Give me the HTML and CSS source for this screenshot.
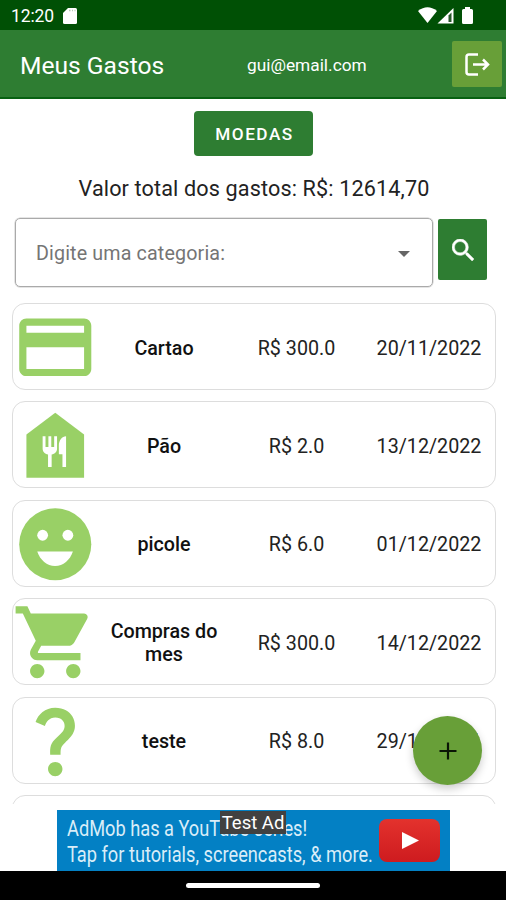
FILE: index.html
```
<!DOCTYPE html>
<html lang="pt-BR">
<head>
<meta charset="utf-8">
<title>Meus Gastos</title>
<link rel="stylesheet" href="styles.css">
</head>
<body>
<div class="screen">
  <div class="status">
    <span class="clock">12:20</span>
    <svg class="sd" viewBox="0 0 14 16"><path d="M5 0h7.500q1.500 0 1.500 1.500v13q0 1.500-1.500 1.500h-11Q0 16 0 14.500V5z" fill="#fff"/><path d="M6 2.500h1.500M9 2.500h1M11.500 2.500h1" stroke="#b5c9b5" stroke-width="1.500"/></svg>
    <svg class="signals" viewBox="0 0 56 18"><path d="M0 4Q9.500-3.500 19 4L9.500 16z" fill="#fff"/><path d="M19.500 16.500L35.500 1v15.500z" fill="#fff"/><path d="M30.500 15V8.500l3-3V15z" fill="#27572a"/><path d="M44 3.500q0-1.500 1.500-1.500h1.500V0h5v2h1.500Q55 2 55 3.500v12q0 1.500-1.500 1.500h-8Q44 17 44 15.500z" fill="#fff"/></svg>
  </div>
  <header class="bar">
    <h1 class="title">Meus Gastos</h1>
    <span class="email">gui@email.com</span>
    <button class="logout" aria-label="Sair"><svg viewBox="0 0 25 23"><path d="M13 1.500H4Q1.500 1.500 1.500 4v15q0 2.500 2.500 2.500h9M8 11.500h15M18 6.500l5 5-5 5" fill="none" stroke="#fff" stroke-width="2.500"/></svg></button>
  </header>
  <main class="content">
    <button class="coins">MOEDAS</button>
    <p class="total">Valor total dos gastos: R$: 12614,70</p>
    <div class="search">
      <div class="select"><span>Digite uma categoria:</span><i class="caret"></i></div>
      <button class="find" aria-label="Buscar"><svg viewBox="3 3 17.500 17.500"><path fill="#fff" stroke="#fff" stroke-width=".4" d="M15.500 14h-.79l-.28-.27A6.471 6.471 0 0 0 16 9.500 6.500 6.500 0 1 0 9.500 16c1.610 0 3.090-.59 4.230-1.570l.27.28v.79l5 4.990L20.490 19l-4.990-5zm-6 0C7.010 14 5 11.990 5 9.500S7.010 5 9.500 5 14 7.010 14 9.500 11.990 14 9.500 14z"/></svg></button>
    </div>
    <div class="list">
      <div class="item">
        <svg class="icon" viewBox="0 0 24 24"><path d="M20 4H4c-1.110 0-1.990.89-1.990 2L2 18c0 1.110.89 2 2 2h16c1.110 0 2-.89 2-2V6c0-1.110-.89-2-2-2zm0 14H4v-6h16v6zm0-10H4V6h16v2z"/></svg>
        <span class="name">Cartao</span><span class="price">R$ 300.0</span><span class="date">20/11/2022</span>
      </div>
      <div class="item">
        <svg class="icon" viewBox="0 0 24 24"><path d="M12 3L4 9v12h16V9l-8-6z"/><path fill="#fff" d="M8.500 9.500h.8v3h.8v-3h.8v3h.8v-3h.8V13c0 .8-.6 1.500-1.500 1.600V18h-1v-3.400C9.100 14.500 8.500 13.800 8.500 13zM15 9.500V18h-1v-3.500h-1V12c0-1.300.9-2.500 2-2.500z"/></svg>
        <span class="name">Pão</span><span class="price">R$ 2.0</span><span class="date">13/12/2022</span>
      </div>
      <div class="item">
        <svg class="icon" viewBox="0 0 24 24"><circle cx="12" cy="12" r="10"/><g fill="#fff"><circle cx="8.500" cy="9.500" r="1.500"/><circle cx="15.500" cy="9.500" r="1.500"/><path d="M7 14h9.900c-.8 2.400-2.700 4-4.950 4S7.800 16.400 7 14z"/></g></svg>
        <span class="name">picole</span><span class="price">R$ 6.0</span><span class="date">01/12/2022</span>
      </div>
      <div class="item">
        <svg class="icon" viewBox="0 0 24 24"><path d="M7 18c-1.100 0-1.990.9-1.990 2S5.900 22 7 22s2-.9 2-2-.9-2-2-2zM1 2v2h2l3.600 7.590-1.350 2.450c-.16.28-.25.61-.25.960 0 1.100.9 2 2 2h12v-2H7.420c-.14 0-.25-.11-.25-.25l.03-.12.900-1.630h7.450c.75 0 1.410-.41 1.750-1.030l3.580-6.490A1.003 1.003 0 0 0 20 4H5.210l-.94-2H1zm16 16c-1.100 0-1.990.9-1.990 2s.89 2 1.990 2 2-.9 2-2-.9-2-2-2z"/></svg>
        <span class="name">Compras do mes</span><span class="price">R$ 300.0</span><span class="date">14/12/2022</span>
      </div>
      <div class="item">
        <svg class="icon" viewBox="0 0 24 24"><path d="M11.070 12.850c.77-1.390 2.250-2.210 3.110-3.440.91-1.290.4-3.700-2.180-3.700-1.690 0-2.520 1.280-2.870 2.340L6.540 6.960C7.250 4.830 9.180 3 11.990 3c2.350 0 3.960 1.070 4.780 2.410.7 1.150 1.110 3.300.03 4.900-1.200 1.770-2.350 2.310-2.970 3.450-.25.46-.35.76-.35 2.240h-2.890c-.01-.78-.13-2.050.48-3.150zM14 20c0 1.100-.9 2-2 2s-2-.9-2-2 .9-2 2-2 2 .9 2 2z"/></svg>
        <span class="name">teste</span><span class="price">R$ 8.0</span><span class="date">29/12/2021</span>
      </div>
      <div class="item"></div>
    </div>
  </main>
  <div class="ad">
    <p class="adtext">AdMob has a YouTube series!<br>Tap for tutorials, screencasts, &amp; more.</p>
    <div class="play"><svg viewBox="0 0 17 17"><path d="M0 0l17 8.500L0 17z" fill="#fff"/></svg></div>
    <span class="test">Test Ad</span>
  </div>
  <div class="nav"><i></i></div>
  <button class="fab" aria-label="Adicionar"><svg viewBox="0 0 18 18"><path d="M9 .5v17M.5 9h17" stroke="#0a1505" stroke-width="2.200"/></svg></button>
</div>
</body>
</html>
```
FILE: styles.css
```
* { box-sizing: border-box; }
body { margin: 0; font-family: Roboto, "Liberation Sans", sans-serif; color: #222; background: #fff; }
button { border: 0; padding: 0; font-family: inherit; color: #fff; display: flex; align-items: center; justify-content: center; }
svg { display: block; }
p { margin: 0; }
.screen { position: relative; width: 506px; height: 900px; display: flex; flex-direction: column; overflow: hidden; }
.status { height: 30px; flex: none; background: #005005; display: flex; align-items: center; padding: 1px 32px 0 11px; color: #fff; }
.clock { font-size: 17.500px; line-height: 30px; width: 52px; letter-spacing: -.1px; }
.sd { width: 14px; height: 16px; }
.signals { width: 56px; height: 18px; margin-left: auto; }
.bar { height: 69px; flex: none; background: #2e7d32; border-bottom: 2px solid #086112; display: flex; align-items: center; padding: 1px 4px 0 20px; color: #fff; }
.title { margin: 0; font-size: 24.600px; font-weight: 400; width: 227px; white-space: nowrap; padding-top: 2px; }
.email { font-size: 17.300px; padding-top: 1px; }
.logout { width: 50px; height: 46px; margin-left: auto; background: #689f38; border-radius: 2px; }
.logout svg { width: 25px; height: 23px; }
.content { height: 705px; flex: none; display: flex; flex-direction: column; padding: 12px 10px 0 12px; }
.coins { align-self: center; width: 119px; height: 45px; margin-right: 1px; padding-left: 2px; background: #2e7d32; border-radius: 4px; font-size: 17.200px; font-weight: 500; letter-spacing: 1.500px; }
.total { margin-top: 18px; line-height: 30px; font-size: 21.600px; text-align: center; white-space: nowrap; letter-spacing: .14px; }
.search { display: flex; margin: 14px 0 0 3px; gap: 5px; height: 70px; }
.select { width: 418px; height: 69px; border: 1.500px solid #aaa; box-shadow: 0 0 0 .5px #ccc; border-radius: 5px; display: flex; align-items: center; justify-content: space-between; padding: 1px 22px 0 20px; font-size: 19.700px; letter-spacing: .14px; color: #757575; }
.caret { border: 6px solid transparent; border-top-color: #666; border-bottom: 0; margin-top: 1px; }
.find { width: 49px; height: 61px; margin-top: 1px; background: #2e7d32; border-radius: 2px; }
.find svg { width: 22px; height: 22px; }
.list { flex: 1; min-height: 0; overflow: hidden; display: flex; flex-direction: column; gap: 11.400px; margin-top: 15px; }
.item { width: 484px; height: 87px; flex: none; border: 1.500px solid #ddd; border-radius: 13px; display: flex; align-items: center; font-size: 19.700px; line-height: 23px; text-align: center; }
.item span { padding-top: 3px; }
.icon { width: 86.500px; height: 86.500px; margin: 1px 0 0 -1.500px; fill: #99d066; flex: none; }
.name { width: 110px; margin-left: 11px; font-weight: 500; color: #111; }
.price { width: 133px; margin-left: 11px; }
.date { width: 132px; white-space: nowrap; }
.ad { position: relative; width: 393px; height: 61px; margin: 6px 0 0 57px; flex: none; background: #0380c4; display: flex; justify-content: space-between; padding: 0 10px; color: #d9edf8; }
.adtext { font-size: 22px; line-height: 26px; padding-top: 6px; white-space: nowrap; width: 305px; transform: scaleX(.828); transform-origin: left; }
.play { width: 61px; height: 43px; margin-top: 9px; border-radius: 8px; background: linear-gradient(#e3322d, #ce1b1f); display: flex; align-items: center; justify-content: center; flex: none; }
.play svg { width: 17px; height: 17px; margin-left: 2px; }
.test { position: absolute; left: 163px; top: 1px; width: 66px; height: 23px; line-height: 25px; text-align: center; background: #414141; color: #fff; font-size: 18.500px; white-space: nowrap; }
.nav { flex: 1; background: #000; display: flex; justify-content: center; padding-top: 12px; }
.nav i { width: 134px; height: 5px; border-radius: 3px; background: #fff; }
.fab { position: absolute; left: 413px; top: 716px; width: 69px; height: 69px; border-radius: 50%; background: #689f38; box-shadow: 0 4px 8px rgba(0,0,0,.2); }
.fab svg { width: 18px; height: 18px; }
```
